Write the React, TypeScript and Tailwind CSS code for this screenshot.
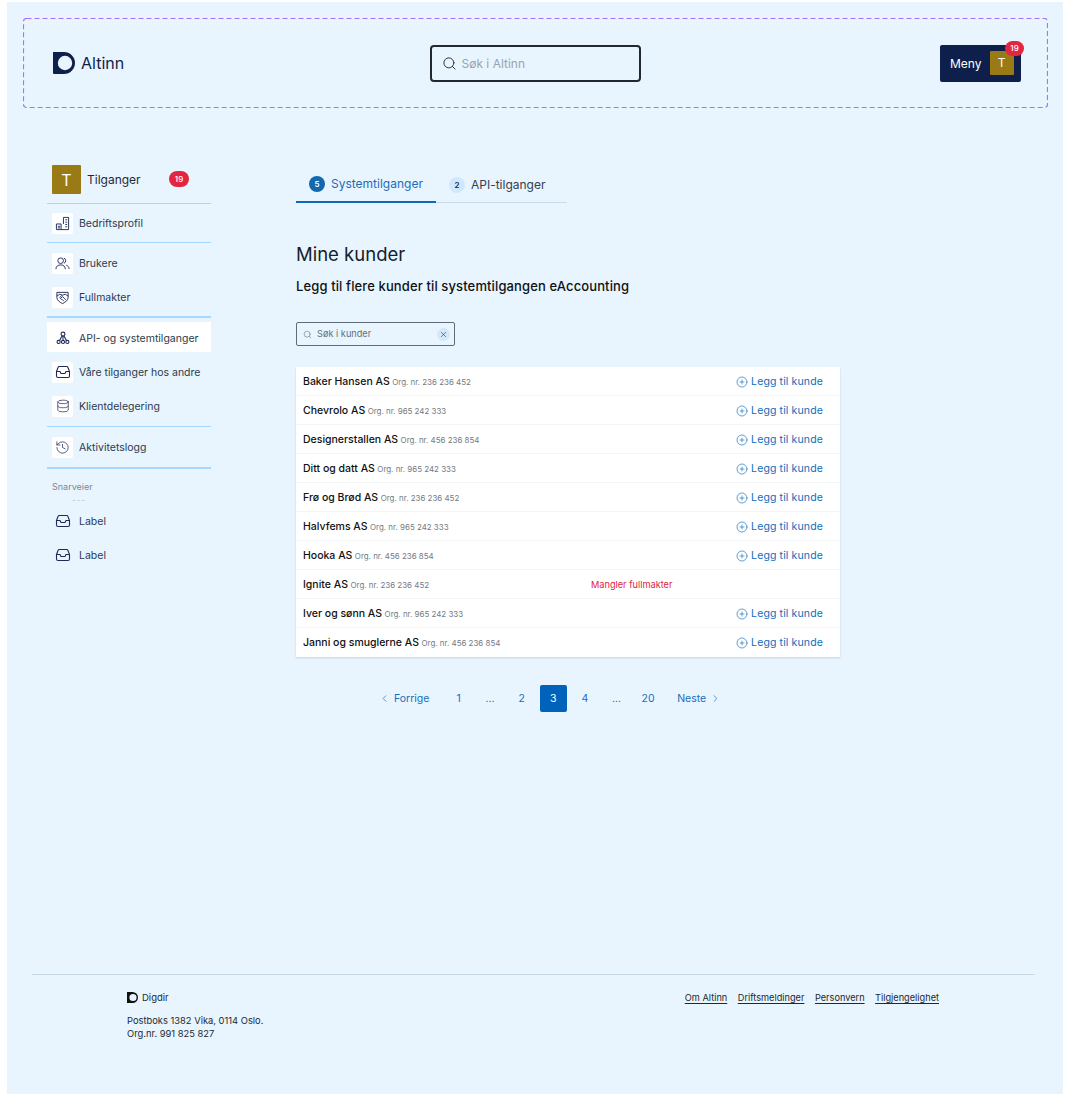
import React from "react";
import { ChevronLeft, ChevronRight, CirclePlus, Database, History, Search, X } from "lucide-react";

const customers = [
  { name: "Baker Hansen AS", org: "236 236 452" },
  { name: "Chevrolo AS", org: "965 242 333" },
  { name: "Designerstallen AS", org: "456 236 854" },
  { name: "Ditt og datt AS", org: "965 242 333" },
  { name: "Frø og Brød AS", org: "236 236 452" },
  { name: "Halvfems AS", org: "965 242 333" },
  { name: "Hooka AS", org: "456 236 854" },
  { name: "Ignite AS", org: "236 236 452", missing: true },
  { name: "Iver og sønn AS", org: "965 242 333" },
  { name: "Janni og smuglerne AS", org: "456 236 854" },
];

function DigdirLogo({ className, color }: { className: string; color: string }) {
  return (
    <svg viewBox="0 0 22 22" className={className}>
      <path
        fillRule="evenodd"
        fill={color}
        d="M0 0h11a11 11 0 0 1 0 22H1a1 1 0 0 1-1-1V0Zm12 3.800a7.200 7.200 0 1 0 0 14.400 7.200 7.200 0 0 0 0-14.400Z"
      />
    </svg>
  );
}

function BuildingIcon() {
  return (
    <svg viewBox="0 0 16 16" fill="none" stroke="currentColor" strokeWidth="1" className="w-[15px] h-[15px]">
      <path d="M1.500 14.500V8.500h5v6h-5ZM6.500 14.500h8V1.500H9v7" />
      <path d="M3 11h2.500M3 12.700h2.500M11 4h2M11 6.500h2M11 9h2M11 11.500h2" />
    </svg>
  );
}

function UsersIcon() {
  return (
    <svg viewBox="0 0 16 16" fill="none" stroke="currentColor" strokeWidth="1" className="w-[15px] h-[15px]">
      <circle cx="6" cy="5" r="3" />
      <path d="M1 14c0-3 2.200-4.500 5-4.500S11 11 11 14" />
      <path d="M9.500 2.200a3 3 0 0 1 0 5.600M12 9.800c1.800.6 3 2 3 4" />
    </svg>
  );
}

function ShieldIcon() {
  return (
    <svg viewBox="0 0 16 16" fill="none" stroke="currentColor" strokeWidth="1" className="w-[15px] h-[15px]">
      <path d="M2 2.500h12v5.500c0 3-3 5-6 6.500-3-1.500-6-3.500-6-6.500V2.500Z" />
      <path d="M2 6.500l3-2 3 1 3-1 3 2M7.500 5.500 5 8l1 1 2-2 3.500 3.500M7.500 10.500 6 9M9.500 12 7.500 10" />
    </svg>
  );
}

function NetworkIcon() {
  return (
    <svg viewBox="0 0 16 16" fill="none" stroke="currentColor" strokeWidth="1.200" className="w-[14px] h-[14px]">
      <circle cx="8" cy="3.500" r="2.200" />
      <circle cx="8" cy="12.500" r="1.800" />
      <circle cx="3" cy="12.500" r="1.800" />
      <circle cx="13" cy="12.500" r="1.800" />
      <path d="M8 5.700v5M7 5.500 4 11M9 5.500 12 11" />
    </svg>
  );
}

function TrayIcon() {
  return (
    <svg viewBox="0 0 16 16" fill="none" stroke="currentColor" strokeWidth="1.100" className="w-4 h-4">
      <path d="M1.500 7.500 3 3.500c.2-.6.700-1 1.300-1h7.400c.6 0 1.100.4 1.300 1l1.500 4v4.500c0 .8-.7 1.500-1.500 1.500H3c-.8 0-1.500-.7-1.500-1.500V7.500Z" />
      <path d="M1.500 7.500h3.500l1 2h4l1-2h3.500" />
    </svg>
  );
}

function NavRow({ icon, label, plain }: { icon: React.ReactNode; label: string; plain?: boolean }) {
  return (
    <div className="h-[34px] flex items-center gap-[6px] px-[5px]">
      <span className={`w-[21px] h-[21px] rounded-[2px] flex items-center justify-center text-[#1e2b58] ${plain ? "" : "bg-white"}`}>
        {icon}
      </span>
      <span className="pt-px text-[10.5px] whitespace-nowrap text-[#2d3a4d]">{label}</span>
    </div>
  );
}

function Line({ thick }: { thick?: boolean }) {
  return <div className={`bg-[#a5d8ff] ${thick ? "h-[2px]" : "h-px"}`} />;
}

function CustomerRow({ name, org, missing }: { name: string; org: string; missing?: boolean }) {
  return (
    <div className="h-[29px] grid grid-cols-[288px_1fr_auto] items-center pl-[7px] pr-[17px] pt-px border-b border-[#f3f4f5] last:border-b-0">
      <div className="flex items-baseline gap-[2.500px]">
        <span className="text-[10.5px] font-[450] text-[#0f1113]">{name}</span>
        <span className="text-[7.950px] text-[#747a82]">Org. nr. {org}</span>
      </div>
      {missing ? (
        <span className="text-[9.200px] text-[#e11d3f]">Mangler fullmakter</span>
      ) : (
        <>
          <span />
          <span className="flex items-center gap-[3px] text-[#0f6cbd] text-[10.5px] tracking-[0.13px]">
            <CirclePlus size={12} strokeWidth={1.300} />
            Legg til kunde
          </span>
        </>
      )}
    </div>
  );
}

function PageButton({ children, active }: { children: React.ReactNode; active?: boolean }) {
  return (
    <span className={`w-[27px] h-[27px] flex items-center justify-center rounded-[2px] text-[10.5px] ${active ? "bg-[#0062ba] text-white" : "text-[#1a6dbb]"}`}>
      {children}
    </span>
  );
}

export default function App() {
  return (
    <div className="min-h-[1101px] bg-white pt-[2px] pl-[7px] font-['Inter',sans-serif]">
      <div className="w-[1056px] h-[1092px] bg-[#e8f5ff] flex flex-col">
        {/* Header */}
        <header className="relative ml-4 mr-[15px] mt-4 h-[90px] grid grid-cols-[1fr_auto_1fr] items-center pl-[30px] pr-[27px]">
          <svg className="absolute inset-0 w-[1025px] h-[90px]" fill="none">
            <rect x="0.5" y="0.5" width="1024" height="89" rx="3" stroke="#a970ff" strokeWidth="1.200" strokeDasharray="5 3" />
          </svg>
          <div className="flex items-center gap-[6px]">
            <DigdirLogo className="w-[22px] h-[22px]" color="#0f1f4b" />
            <span className="text-[16px] text-[#0f1f4b]">Altinn</span>
          </div>
          <div className="w-[211px] h-[37px] rounded-[4px] border-2 border-[#23272e] flex items-center gap-[5px] pl-[10px] -ml-[4px]">
            <Search size={15} strokeWidth={1.500} className="text-[#23272e]" />
            <span className="text-[12px] pt-px text-[#9aa3ae]">Søk i Altinn</span>
          </div>
          <div className="justify-self-end relative w-[81px] h-[37px] bg-[#0f1f4b] rounded-[2px] flex items-center pl-[10px] gap-[8px]">
            <span className="text-[12px] pt-px text-white">Meny</span>
            <span className="w-[24px] h-[24px] bg-[#9a7a14] rounded-[1px] flex items-center justify-center text-[12px] text-white">T</span>
            <span className="absolute -top-[4px] -right-[3px] w-[19px] h-[15px] rounded-full bg-[#e5243f] text-white text-[8px] font-medium flex items-center justify-center">19</span>
          </div>
        </header>

        {/* Body */}
        <div className="flex mt-[56px] pl-[40px]">
          <aside className="w-[164px] flex-shrink-0 mt-px">
            <div className="h-[38px] flex items-start gap-[6px] pl-[5px]">
              <span className="w-[29px] h-[29px] bg-[#9a7a14] rounded-[1px] flex items-center justify-center text-white text-[16px]">T</span>
              <span className="mt-[6px] text-[12px] text-[#1f2a38] w-[76px]">Tilganger</span>
              <span className="mt-[6px] w-[20px] h-[16px] rounded-full bg-[#e5243f] text-white text-[8px] font-medium flex items-center justify-center">19</span>
            </div>
            <Line />
            <div className="py-[2px]"><NavRow icon={<BuildingIcon />} label="Bedriftsprofil" /></div>
            <Line />
            <div className="pt-[3px]">
              <NavRow icon={<UsersIcon />} label="Brukere" />
              <NavRow icon={<ShieldIcon />} label="Fullmakter" />
            </div>
            <div className="mt-[2px]"><Line thick /></div>
            <div className="pt-[4px]">
              <div className="bg-white h-[30px] pt-[2px] flex items-center"><NavRow icon={<NetworkIcon />} label="API- og systemtilganger" plain /></div>
              <div className="pt-[3px]">
                <NavRow icon={<TrayIcon />} label="Våre tilganger hos andre" />
                <NavRow icon={<Database size={14} strokeWidth={1.200} />} label="Klientdelegering" />
              </div>
            </div>
            <div className="mt-[3px]"><Line /></div>
            <div className="py-[3px]"><NavRow icon={<History size={15} strokeWidth={1.200} />} label="Aktivitetslogg" /></div>
            <Line thick />
            <div className="pl-[5px] pt-[12px] text-[9px] leading-[12px] text-[#7d8794]">Snarveier</div>
            <div className="pl-[25px] mt-[3px] h-[8px] text-[8px] leading-[8px] tracking-[1px] text-[#b9c1ca]">---</div>
            <NavRow icon={<TrayIcon />} label="Label" plain />
            <NavRow icon={<TrayIcon />} label="Label" plain />
          </aside>

          <main className="ml-[85px] w-[544px]">
            {/* Tabs */}
            <div className="w-[271px] flex border-b border-[#c7dceb] h-[39px]">
              <div className="w-[140px] -mb-px h-[39px] border-b-[2px] border-[#0f68ba] flex items-center gap-[6px] pl-[13px] pt-[3px]">
                <span className="w-4 h-4 rounded-full bg-[#1269ad] text-white text-[8px] font-semibold flex items-center justify-center">5</span>
                <span className="text-[12px] text-[#1a6dbb]">Systemtilganger</span>
              </div>
              <div className="flex items-center gap-[6px] pl-[13px] pt-[3px]">
                <span className="w-4 h-4 rounded-full bg-[#d0e8fb] text-[#1f2a38] text-[8px] font-semibold flex items-center justify-center">2</span>
                <span className="text-[12px] text-[#33404f]">API-tilganger</span>
              </div>
            </div>

            <h1 className="mt-[38px] text-[18.500px] leading-[26px] text-[#16202b]">Mine kunder</h1>
            <p className="mt-[10px] text-[13px] leading-[18px] font-[450] tracking-[0.12px] text-[#0f1113]">Legg til flere kunder til systemtilgangen eAccounting</p>

            {/* Search */}
            <div className="mt-[27px] w-[159px] h-[24px] border border-[#5f6b78] rounded-[2px] flex items-center pl-[6px] pr-[4px]">
              <Search size={9} strokeWidth={1.500} className="text-[#66707c]" />
              <span className="ml-[5px] text-[9.200px] text-[#66707c] flex-1">Søk i kunder</span>
              <span className="w-[13px] h-[13px] rounded-full bg-[#d3e8f8] flex items-center justify-center text-[#1f2a38]">
                <X size={9} strokeWidth={1.500} />
              </span>
            </div>

            {/* List */}
            <div className="mt-[21px] bg-white shadow-[0_1px_2px_rgba(0,0,0,0.15)]">
              {customers.map((c) => (
                <CustomerRow key={c.name} name={c.name} org={c.org} missing={c.missing} />
              ))}
            </div>

            {/* Pagination */}
            <div className="mt-[28px] ml-[83px] flex items-center gap-[4.600px] text-[#1a6dbb]">
              <span className="flex items-center gap-[4px] text-[10.5px] pr-[11px]">
                <ChevronLeft size={11} strokeWidth={1.500} />
                Forrige
              </span>
              <PageButton>1</PageButton>
              <PageButton>...</PageButton>
              <PageButton>2</PageButton>
              <PageButton active>3</PageButton>
              <PageButton>4</PageButton>
              <PageButton>...</PageButton>
              <PageButton>20</PageButton>
              <span className="flex items-center gap-[4px] text-[10.5px] pl-[11px]">
                Neste
                <ChevronRight size={11} strokeWidth={1.500} />
              </span>
            </div>
          </main>
        </div>

        {/* Footer */}
        <footer className="mt-auto ml-[25px] mr-[28px] mb-[54px] border-t border-[#c7d8e6] pt-[16px] pl-[95px] pr-[96px] flex justify-between items-start">
          <div>
            <div className="flex items-center gap-[4px]">
              <DigdirLogo className="w-[11px] h-[11px]" color="#0f1113" />
              <span className="text-[9.500px] text-[#22282f]">Digdir</span>
            </div>
            <p className="mt-[9px] text-[9.350px] leading-[13px] text-[#22282f]">
              Postboks 1382 Vika, 0114 Oslo.
              <br />
              Org.nr. 991 825 827
            </p>
          </div>
          <div className="flex gap-[10.500px] text-[9.200px] text-[#22282f] underline underline-offset-2">
            <span>Om Altinn</span>
            <span>Driftsmeldinger</span>
            <span>Personvern</span>
            <span>Tilgjengelighet</span>
          </div>
        </footer>
      </div>
    </div>
  );
}
